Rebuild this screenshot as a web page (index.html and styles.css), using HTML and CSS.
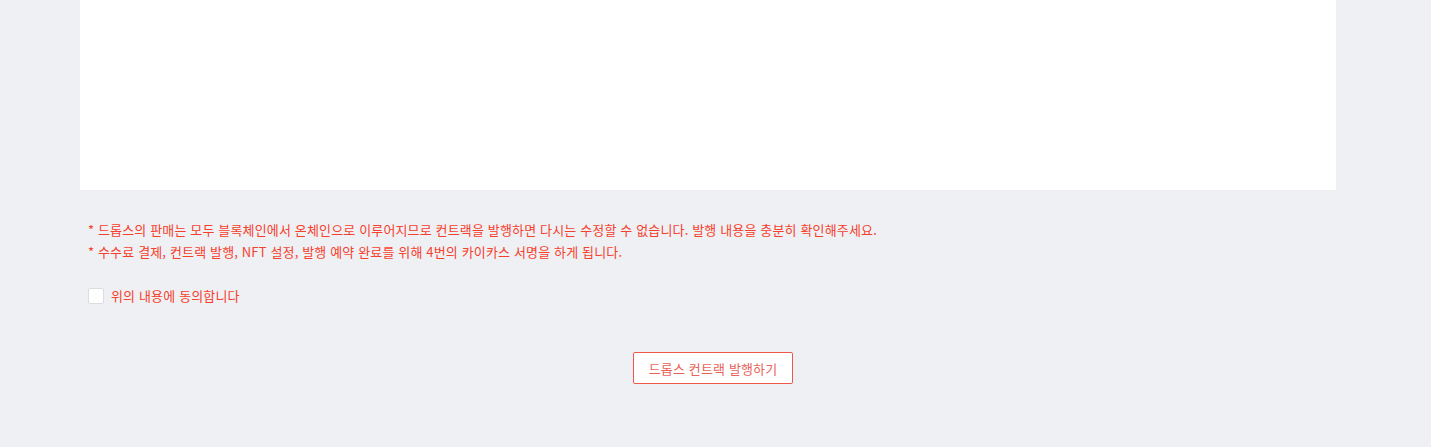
FILE: index.html
```html
<!DOCTYPE html>
<html lang="ko">
<head>
    <meta charset="UTF-8">
    <title>드롭스 컨트랙 발행</title>
    <link rel="stylesheet" href="styles.css">
</head>
<body>
    <div class="container">
        <div class="panel"></div>
        <div class="notice">
            <p>* 드롭스의 판매는 모두 블록체인에서 온체인으로 이루어지므로 컨트랙을 발행하면 다시는 수정할 수 없습니다. 발행 내용을 충분히 확인해주세요.</p>
            <p>* 수수료 결제, 컨트랙 발행, NFT 설정, 발행 예약 완료를 위해 4번의 카이카스 서명을 하게 됩니다.</p>
        </div>
        <label class="agree">
            <input type="checkbox" class="agree-check">
            <span class="box"></span>
            <span>위의 내용에 동의합니다</span>
        </label>
        <div class="actions">
            <button type="button" class="btn-issue">드롭스 컨트랙 발행하기</button>
        </div>
    </div>
</body>
</html>
```

FILE: styles.css
```css
body {
    margin: 0;
    background: #eff0f4;
    font-family: "Noto Sans CJK KR", "Noto Sans", sans-serif;
    font-size: 13px;
    letter-spacing: 0.15px;
}

.container {
    width: 1256px;
    margin: 0 0 0 80px;
}

.panel {
    height: 190px;
    background: #ffffff;
}

.notice {
    padding: 29px 8px 0;
    color: #f5402c;
}

.notice p {
    margin: 0;
    line-height: 22px;
}

.agree {
    display: flex;
    align-items: center;
    gap: 7px;
    margin: 24px 0 0 8px;
    color: #f5402c;
    line-height: 18px;
    cursor: pointer;
}

.agree-check {
    display: none;
}

.box {
    width: 14px;
    height: 14px;
    border: 1px solid #dcdde2;
    border-radius: 2px;
    background: #fff;
}

.actions {
    display: flex;
    justify-content: center;
    padding: 47px 0 0 10px;
}

.btn-issue {
    width: 160px;
    height: 32px;
    border: 1px solid #f0564a;
    border-radius: 2px;
    background: #fff;
    color: #e8635a;
    font-family: inherit;
    font-size: 13px;
    letter-spacing: 0.15px;
    cursor: pointer;
}
```
